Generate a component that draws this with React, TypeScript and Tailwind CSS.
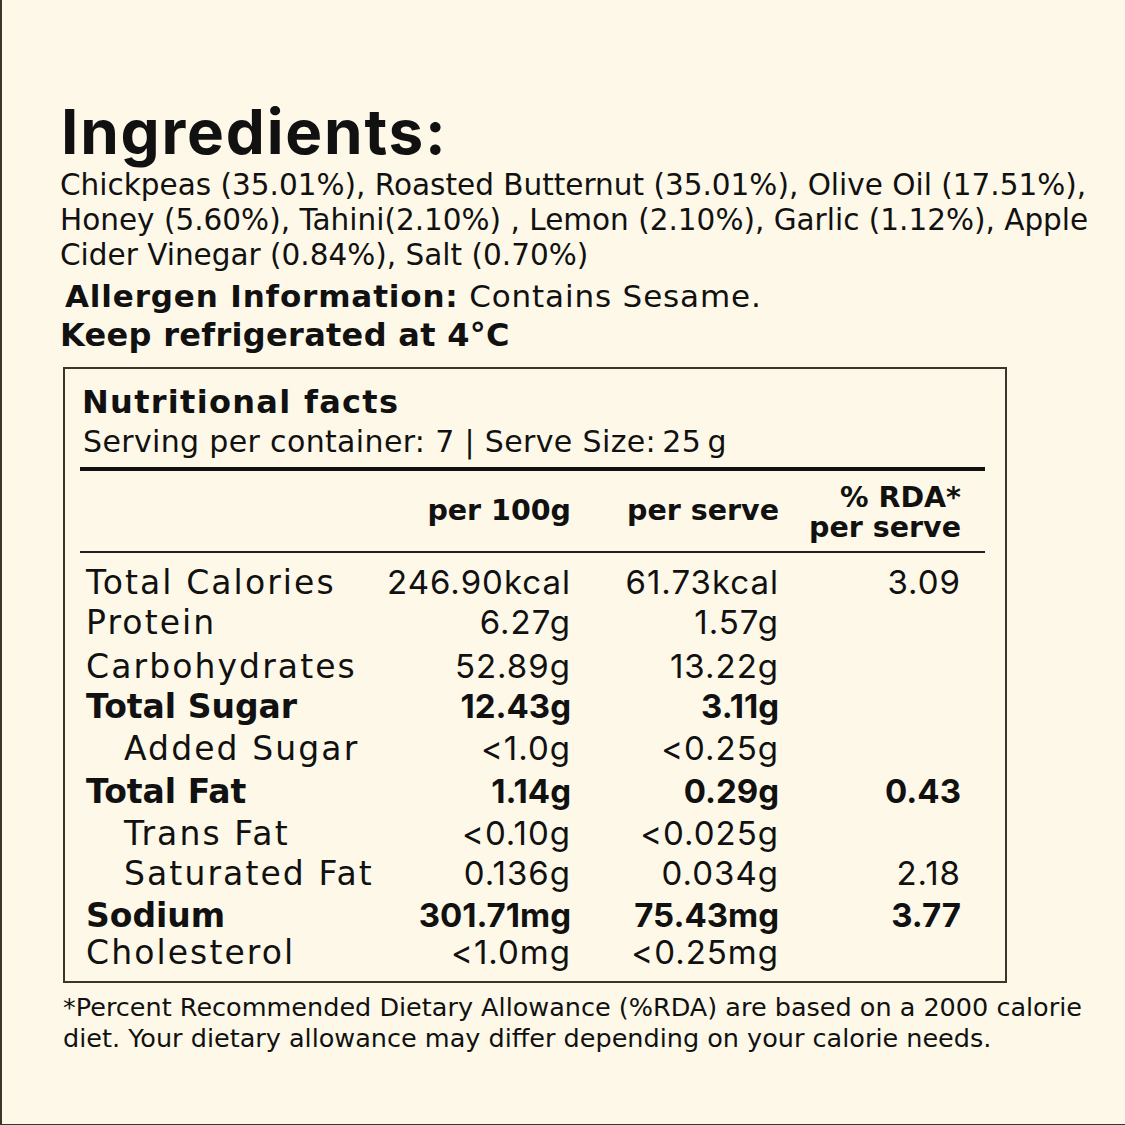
import React from 'react';

type Row = {
  label: string;
  per100: string;
  serve: string;
  rda?: string;
  bold?: boolean;
  indent?: boolean;
  h: string;
};

const rows: Row[] = [
  { label: 'Total Calories', per100: '246.90kcal', serve: '61.73kcal', rda: '3.09', h: 'h-[40px]' },
  { label: 'Protein', per100: '6.27g', serve: '1.57g', h: 'h-[44px]' },
  { label: 'Carbohydrates', per100: '52.89g', serve: '13.22g', h: 'h-[40px]' },
  { label: 'Total Sugar', per100: '12.43g', serve: '3.11g', bold: true, h: 'h-[42px]' },
  { label: 'Added Sugar', per100: '<1.0g', serve: '<0.25g', indent: true, h: 'h-[43px]' },
  { label: 'Total Fat', per100: '1.14g', serve: '0.29g', rda: '0.43', bold: true, h: 'h-[42px]' },
  { label: 'Trans Fat', per100: '<0.10g', serve: '<0.025g', indent: true, h: 'h-[40px]' },
  { label: 'Saturated Fat', per100: '0.136g', serve: '0.034g', rda: '2.18', indent: true, h: 'h-[42px]' },
  { label: 'Sodium', per100: '301.71mg', serve: '75.43mg', rda: '3.77', bold: true, h: 'h-[37px]' },
  { label: 'Cholesterol', per100: '<1.0mg', serve: '<0.25mg', h: 'h-[40px]' },
];

const num = "font-['Inter',sans-serif] text-[33px] leading-[40px] text-right whitespace-nowrap";

export default function App() {
  return (
    <div className="w-[1125px] h-[1125px] bg-[#fdf8e8] border-l-2 border-b border-[#3a362c] text-[#111] overflow-hidden font-['DejaVu_Sans',sans-serif]">
      <div className="pl-[58px] pt-[100px]">
        <h1 className="ml-[1px] font-['Inter',sans-serif] text-[62px] font-bold leading-[64px] tracking-[1.8px]">
          Ingredients:
        </h1>
        <p className="mt-[4px] text-[29.5px] leading-[35px]">
          Chickpeas (35.01%), Roasted Butternut (35.01%), Olive Oil (17.51%),
          <br />
          Honey (5.60%), Tahini(2.10%) , Lemon (2.10%), Garlic (1.12%), Apple
          <br />
          Cider Vinegar (0.84%), Salt (0.70%)
        </p>
        <p className="mt-[4px] ml-[5px] text-[31px] leading-[38px] tracking-[0.85px]">
          <span className="font-bold">Allergen Information:</span> Contains Sesame.
        </p>
        <p className="text-[32px] leading-[40px] font-bold tracking-[0.3px]">Keep refrigerated at 4°C</p>

        <div className="mt-[12px] ml-[3px] w-[944px] border-2 border-[#3a362c] pl-[15px] pr-[20px] pt-[13px] pb-[9px]">
          <div className="text-[32px] font-bold leading-[40px] pl-[2px] tracking-[1.3px]">Nutritional facts</div>
          <div className="mt-[2px] pl-[3px] text-[30px] leading-[36px] tracking-[0.35px]">
            Serving per container: 7 | Serve Size:{'\u2009'}25{'\u2009'}g
          </div>
          <div className="mt-[7px] h-[4px] bg-[#111]" />
          <div className="flex items-center h-[80px] font-bold text-[28.5px]">
            <div className="flex-1" />
            <div className="w-[200px] text-right">per 100g</div>
            <div className="w-[208px] text-right">per serve</div>
            <div className="w-[182px] text-right leading-[30px] pt-[3px]">
              <div>% RDA*</div>
              <div>per serve</div>
            </div>
            <div className="w-[24px]" />
          </div>
          <div className="h-[2px] bg-[#222]" />
          <div className="pt-[9px]">
            {rows.map((r) => (
              <div key={r.label} className={`flex items-baseline ${r.h} ${r.bold ? 'font-bold' : ''}`}>
                <div
                  className={`flex-1 min-w-0 whitespace-nowrap text-[33px] leading-[40px] ${
                    r.bold ? '' : 'tracking-[2.1px]'
                  } ${r.indent ? 'pl-[44px]' : 'pl-[6px]'}`}
                >
                  {r.label}
                </div>
                <div className={`w-[200px] shrink-0 ${num} ${r.bold ? '' : 'tracking-[1px]'}`}>{r.per100}</div>
                <div className={`w-[208px] shrink-0 ${num} ${r.bold ? '' : 'tracking-[1px]'}`}>{r.serve}</div>
                <div className={`w-[182px] shrink-0 ${num} ${r.bold ? '' : 'tracking-[1px]'}`}>{r.rda ?? ''}</div>
                <div className="w-[24px] shrink-0" />
              </div>
            ))}
          </div>
        </div>

        <p className="mt-[9px] ml-[3px] w-[1060px] text-[25.5px] leading-[31px]">
          *Percent Recommended Dietary Allowance (%RDA) are based on a 2000 calorie
          <br />
          diet. Your dietary allowance may differ depending on your calorie needs.
        </p>
      </div>
    </div>
  );
}
